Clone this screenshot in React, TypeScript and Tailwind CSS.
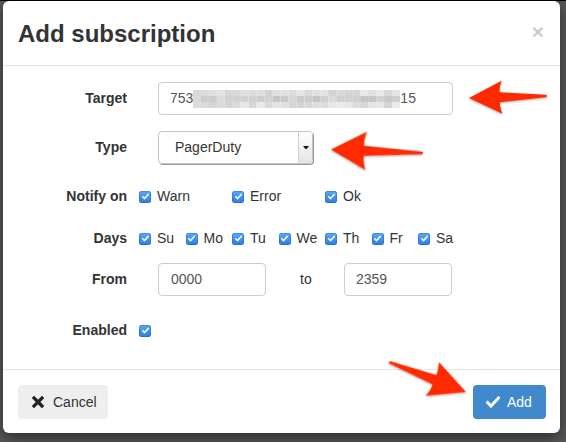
import React from "react";

function Check() {
  return (
    <span className="inline-flex h-[12px] w-[12px] shrink-0 items-center justify-center rounded-[3px] bg-gradient-to-b from-[#5aa7fa] to-[#2a7de6] shadow-[inset_0_0_0_0.5px_rgba(0,60,160,0.5)]">
      <svg width="9" height="9" viewBox="0 0 9 9">
        <path d="M1.8 4.8 L3.6 6.6 L7.2 2.4" fill="none" stroke="#fff" strokeWidth="1.6" strokeLinecap="round" strokeLinejoin="round" />
      </svg>
    </span>
  );
}

function CheckItem({ label, w }: { label: string; w: string }) {
  return (
    <div className={`flex items-center ${w}`}>
      <Check />
      <span className="ml-[6px] text-[14px] text-[#333]">{label}</span>
    </div>
  );
}

function Row({ label, mt, children }: { label: string; mt: string; children: React.ReactNode }) {
  return (
    <div className={`flex h-[33px] items-center ${mt}`}>
      <div className="w-[124px] text-right text-[14px] font-bold text-[#333]">{label}</div>
      {children}
    </div>
  );
}

function Pixelated() {
  const cells: React.ReactNode[] = [];
  const cols = 26;
  const rows = 3;
  for (let r = 0; r < rows; r++) {
    for (let c = 0; c < cols; c++) {
      const v = Math.abs(Math.sin((c + 1) * 12.9898 + (r + 1) * 78.233) * 43758.5453) % 1;
      const base = r === 1 ? 196 : 210;
      const g = Math.round(base + v * 24);
      cells.push(
        <rect key={`${r}-${c}`} x={c * 8} y={r * 6} width={8} height={6} fill={`rgb(${g},${g},${g})`} />
      );
    }
  }
  return (
    <svg width="207" height="18" viewBox="0 0 208 18" preserveAspectRatio="none" className="shrink-0">
      {cells}
    </svg>
  );
}

function arrowPath(L: number, hl: number, hw: number, sw: number) {
  const n = hl - 2;
  return `M0,0 L${hl},${-hw} Q${hl - 3},${-hw * 0.45} ${n},${-sw} L${L - 1},-1.2 Q${L + 1},0 ${L - 1},1.2 L${n},${sw} Q${hl - 3},${hw * 0.45} ${hl},${hw} Z`;
}

function Arrow({ tip, tail, hl, hw, sw }: { tip: [number, number]; tail: [number, number]; hl: number; hw: number; sw: number }) {
  const dx = tail[0] - tip[0];
  const dy = tail[1] - tip[1];
  const L = Math.sqrt(dx * dx + dy * dy);
  const ang = (Math.atan2(dy, dx) * 180) / Math.PI;
  return (
    <g transform={`translate(${tip[0]},${tip[1]}) rotate(${ang})`}>
      <path d={arrowPath(L, hl, hw, sw)} fill="#ff2a06" />
    </g>
  );
}

export default function App() {
  return (
    <div className="relative h-[442px] w-[566px] overflow-hidden bg-[#585858] font-['Liberation_Sans',Arial,sans-serif]">
      <div className="h-[1px] bg-black" />
      <div className="ml-[3px] flex h-[432px] w-[557px] flex-col rounded-[6px] bg-white shadow-[0_5px_15px_rgba(0,0,0,0.5)]">
        {/* header */}
        <div className="flex h-[65px] items-center justify-between border-b border-[#e5e5e5] pl-[15px] pr-[16px]">
          <h4 className="mt-[2px] text-[24px] font-bold leading-[24px] text-[#333]">Add subscription</h4>
          <span className="mb-[4px] text-[21px] font-bold leading-none text-black opacity-20">×</span>
        </div>
        {/* body */}
        <div className="flex flex-1 flex-col pt-[16px]">
          <Row label="Target" mt="">
            <div className="ml-[31px] flex h-[33px] w-[295px] items-center rounded-[4px] border border-[#ccc] pl-[11px] text-[14px] text-[#555]">
              <span>753</span>
              <Pixelated />
              <span>15</span>
            </div>
          </Row>
          <Row label="Type" mt="mt-[16px]">
            <div className="ml-[31px] flex h-[33px] w-[155px] overflow-hidden rounded-[4px] border border-[#c4c4c4] shadow-[1px_1px_0_#9a9a9a]">
              <div className="flex flex-1 items-center pl-[16px] text-[14px] text-[#333]">PagerDuty</div>
              <div className="flex w-[14px] items-center justify-center border-l border-[#d0d0d0] bg-gradient-to-b from-[#ffffff] to-[#e4e4e4]">
                <svg width="6" height="4" viewBox="0 0 6 4">
                  <path d="M0 0 L6 0 L3 3.5 Z" fill="#111" />
                </svg>
              </div>
            </div>
          </Row>
          <Row label="Notify on" mt="mt-[16px]">
            <div className="ml-[12px] flex">
              <CheckItem label="Warn" w="w-[93px]" />
              <CheckItem label="Error" w="w-[93px]" />
              <CheckItem label="Ok" w="w-[93px]" />
            </div>
          </Row>
          <Row label="Days" mt="mt-[9px]">
            <div className="ml-[12px] flex">
              {["Su", "Mo", "Tu", "We", "Th", "Fr", "Sa"].map((d) => (
                <CheckItem key={d} label={d} w="w-[46.5px]" />
              ))}
            </div>
          </Row>
          <Row label="From" mt="mt-[8px]">
            <div className="ml-[31px] flex h-[33px] w-[108px] items-center rounded-[4px] border border-[#ccc] pl-[12px] text-[14px] text-[#555]">
              0000
            </div>
            <span className="ml-[34px] w-[44px] text-[14px] text-[#333]">to</span>
            <div className="flex h-[33px] w-[108px] items-center rounded-[4px] border border-[#ccc] pl-[11px] text-[14px] text-[#555]">
              2359
            </div>
          </Row>
          <Row label="Enabled" mt="mt-[18px]">
            <div className="ml-[12px] flex">
              <Check />
            </div>
          </Row>
        </div>
        {/* footer */}
        <div className="flex items-center justify-between border-t border-[#e5e5e5] pb-[14px] pl-[15px] pr-[14px] pt-[15px]">
          <button className="flex h-[34px] w-[90px] items-center rounded-[4px] bg-[#eeeeee] pl-[14px] text-[14px] text-[#333]">
            <svg width="12" height="12" viewBox="0 0 12 12">
              <path d="M2 2 L10 10 M10 2 L2 10" stroke="#222" strokeWidth="3.2" strokeLinecap="square" />
            </svg>
            <span className="ml-[9px]">Cancel</span>
          </button>
          <button className="flex h-[34px] w-[73px] items-center rounded-[4px] bg-[#3f89cc] pl-[13px] text-[14px] text-white">
            <svg width="14" height="12" viewBox="0 0 14 12">
              <path d="M1.5 6.5 L5 10 L12.5 2" fill="none" stroke="#fff" strokeWidth="3" strokeLinecap="square" strokeLinejoin="miter" />
            </svg>
            <span className="ml-[7px]">Add</span>
          </button>
        </div>
      </div>
      <svg className="pointer-events-none absolute left-0 top-0" width="566" height="442" viewBox="0 0 566 442">
        <defs>
          <filter id="sh" x="-20%" y="-20%" width="140%" height="140%">
            <feDropShadow dx="0" dy="1" stdDeviation="1.2" floodColor="#000" floodOpacity="0.35" />
          </filter>
        </defs>
        <g filter="url(#sh)">
          <Arrow tip={[469, 98]} tail={[547, 96]} hl={33} hw={16.5} sw={5} />
          <Arrow tip={[331, 149.5]} tail={[423, 153]} hl={35} hw={19} sw={5} />
          <Arrow tip={[466, 392]} tail={[389, 362]} hl={36} hw={18} sw={5} />
        </g>
      </svg>
    </div>
  );
}
